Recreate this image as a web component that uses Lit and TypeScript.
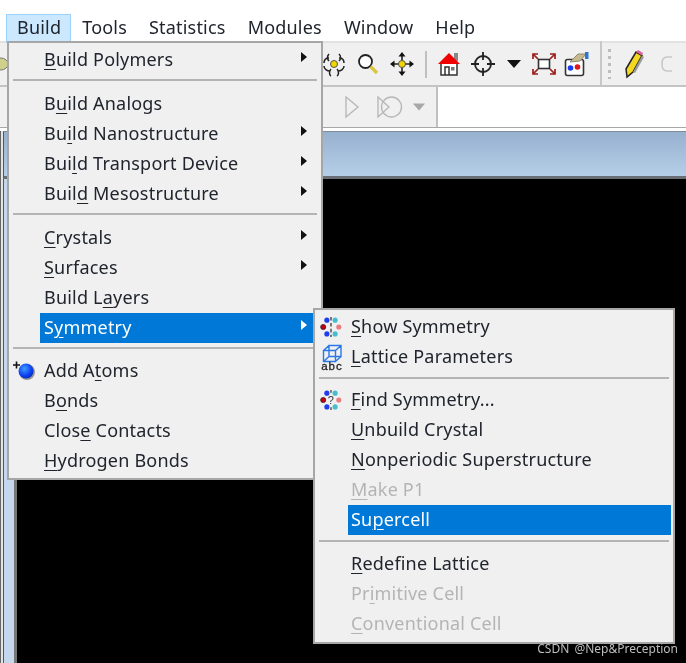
import { LitElement, html, css, svg } from 'lit';
import { customElement } from 'lit/decorators.js';

type Row = {
  text?: string; // label, the mnemonic letter goes between [ ]
  arrow?: boolean;
  on?: boolean;
  off?: boolean;
  icon?: unknown;
  sep?: boolean;
};

const dots = (middle: unknown) => html`<svg width="22" height="22" viewBox="0 0 24 24">
  <circle cx="7.5" cy="4.5" r="2.800" fill="#1f3df0"/><circle cx="16.5" cy="4.5" r="2.800" fill="#45bcd0"/>
  <circle cx="3.500" cy="12" r="2.800" fill="#c8000f" stroke="#222" stroke-width=".8"/><circle cx="20.500" cy="12" r="2.800" fill="#e87c80"/>
  <circle cx="7.5" cy="19.5" r="2.800" fill="#1f3df0"/><circle cx="16.5" cy="19.5" r="2.800" fill="#45bcd0"/>
  ${middle}
</svg>`;

const showIcon = dots(svg`<path d="M12 1v22" stroke="#333" stroke-width="1.4" stroke-dasharray="4 2.5" fill="none"/>`);
const findIcon = dots(svg`<path d="M12 1v3M12 20v3" stroke="#333" stroke-width="1.3"/><text x="12" y="16.500" font-size="12" text-anchor="middle" font-family="Liberation Sans, sans-serif" fill="#333">?</text>`);

const latticeIcon = html`<svg width="24" height="28" viewBox="0 0 24 28">
  <g fill="none" stroke="#2a78e8" stroke-width="1.4">
    <path d="M3.500 7.500h12v11h-12zM9 2.500h12v11H9zM3.500 7.500L9 2.500M15.500 7.500L21 2.500M15.500 18.500L21 13.500M3.500 18.500L9 13.500"/>
  </g>
  <text x="12" y="27" font-size="11.500" text-anchor="middle" letter-spacing="1" font-family="Liberation Sans, sans-serif" stroke="#222" stroke-width=".3" fill="#222">abc</text>
</svg>`;

const atomIcon = html`<svg width="28" height="24" viewBox="0 0 28 24">
  <path d="M1 6h7M4.500 2.500v7" stroke="#111" stroke-width="1.600"/>
  <circle cx="15" cy="13" r="8" fill="#555" opacity=".6"/>
  <defs><radialGradient id="ball" cx=".4" cy=".35" r=".7"><stop offset="0" stop-color="#3f9bff"/><stop offset=".7" stop-color="#0a3cf0"/><stop offset="1" stop-color="#0a2ab0"/></radialGradient></defs>
  <circle cx="14" cy="12" r="7.500" fill="url(#ball)"/>
</svg>`;

const buildMenu: Row[] = [
  { text: '[B]uild Polymers', arrow: true },
  { sep: true },
  { text: 'B[u]ild Analogs' },
  { text: 'Bu[i]ld Nanostructure', arrow: true },
  { text: 'Bui[l]d Transport Device', arrow: true },
  { text: 'Buil[d] Mesostructure', arrow: true },
  { sep: true },
  { text: '[C]rystals', arrow: true },
  { text: '[S]urfaces', arrow: true },
  { text: 'Build L[a]yers' },
  { text: 'S[y]mmetry', arrow: true, on: true },
  { sep: true },
  { text: 'Add A[t]oms', icon: atomIcon },
  { text: 'B[o]nds' },
  { text: 'Clos[e] Contacts' },
  { text: '[H]ydrogen Bonds' },
];

const symmetryMenu: Row[] = [
  { text: '[S]how Symmetry', icon: showIcon },
  { text: '[L]attice Parameters', icon: latticeIcon },
  { sep: true },
  { text: '[F]ind Symmetry...', icon: findIcon },
  { text: '[U]nbuild Crystal' },
  { text: '[N]onperiodic Superstructure' },
  { text: '[M]ake P1', off: true },
  { text: 'Su[p]ercell', on: true },
  { sep: true },
  { text: '[R]edefine Lattice' },
  { text: 'Pr[i]mitive Cell', off: true },
  { text: '[C]onventional Cell', off: true },
];

function label(text: string) {
  const m = text.match(/^(.*)\[(.)\](.*)$/);
  if (!m) return text;
  return html`${m[1]}<u>${m[2]}</u>${m[3]}`;
}

@customElement('app-root')
export class AppRoot extends LitElement {
  static styles = css`
    :host {
      display: block;
      position: relative;
      width: 686px;
      height: 663px;
      overflow: hidden;
      background: #fff;
      font-family: 'Noto Sans', sans-serif;
      font-size: 18px;
      letter-spacing: 0.2px;
      color: #20242c;
    }
    .page {
      height: 100%;
      filter: blur(0.35px);
    }
    .menubar {
      display: flex;
      height: 41px;
      padding: 14px 0 0 6px;
      box-sizing: border-box;
      background: #fff;
    }
    .top {
      height: 27px;
      line-height: 24px;
      padding: 0 10px;
      border: 1px solid transparent;
    }
    .top.open {
      background: #cce8ff;
      border: 1px solid #99d1ff;
      padding: 0 9px 0 10px;
    }
    .toolbar {
      display: flex;
      align-items: center;
      height: 42px;
      background: #f0f0f0;
      border-top: 2px solid #e2e2e2;
      border-bottom: 2px solid #c4c4c4;
      box-sizing: content-box;
    }
    .cell {
      display: flex;
      justify-content: center;
      align-items: center;
      flex: none;
    }
    .vsep {
      flex: none;
      width: 2px;
      height: 27px;
      margin: 0 5px 0 6px;
      background: #c0c0c0;
    }
    .grip {
      flex: none;
      width: 3px;
      height: 30px;
      margin-left: 6px;
      background: repeating-linear-gradient(#bdbdbd 0 3px, transparent 3px 7px);
    }
    .end {
      align-self: stretch;
      flex: none;
      width: 2px;
      margin: -2px 0 0 6px;
      background: #c8c8c8;
    }
    .row2 {
      display: flex;
      height: 40px;
      background: #fff;
      border-bottom: 1px solid #a8a8a8;
    }
    .row2-tools {
      display: flex;
      align-items: center;
      width: 436px;
      flex: none;
      background: #f0f0f0;
      border-right: 2px solid #c0c0c0;
    }
    .frame {
      display: flex;
      flex-direction: column;
      height: 533px;
      margin-top: 3px;
      padding-left: 2px;
      border-left: 1px solid #666;
      background: #e4e4e4;
    }
    .titlebar {
      height: 44px;
      border-left: 1px solid #555;
      background: linear-gradient(#96b0cf, #b6cfe8);
      border-top: 1px solid #7f8c99;
      border-bottom: 3px solid #6a6f76;
    }
    .body {
      flex: 1;
      border-left: 1px solid #555;
      background: #000;
      display: flex;
    }
    .body-edge {
      flex: none;
      width: 10px;
      background: #c4d7ec;
      border-right: 3px solid #777;
    }
    .menu {
      position: absolute;
      box-sizing: border-box;
      background: #f0f0f0;
      border: 2px solid #a6a6a6;
      padding-top: 2px;
    }
    .menu.build {
      left: 7px;
      top: 41px;
      width: 316px;
      height: 439px;
    }
    .menu.sym {
      left: 313px;
      top: 308px;
      width: 362px;
      height: 336px;
    }
    .item {
      display: flex;
      align-items: center;
      position: relative;
      height: 30px;
      line-height: 28px;
      margin: 0 2px 0 31px;
      padding-left: 4px;
      white-space: nowrap;
    }
    .item .text {
      margin-bottom: 2px;
    }
    .sym .item {
      margin-left: 33px;
      padding-left: 3px;
    }
    .item u {
      text-underline-offset: 3px;
      text-decoration-thickness: 1px;
    }
    .item.on {
      background: #0078d7;
      color: #fff;
    }
    .item.off {
      color: #b4b4b4;
    }
    .arrow {
      margin-left: auto;
      margin-right: 12px;
      margin-top: -7px;
      width: 0;
      height: 0;
      border-left: 6px solid #111;
      border-top: 5.5px solid transparent;
      border-bottom: 5.5px solid transparent;
    }
    .item.on .arrow {
      border-left-color: #fff;
    }
    .icon {
      position: absolute;
      top: 50%;
      transform: translateY(-50%);
      display: flex;
      left: -28px;
    }
    .sep {
      height: 2px;
      margin: 4px 4px 8px 4px;
      background: #b4b4b4;
    }
    .sep + .item.shift {
      margin-top: -1px;
    }
    .sym .sep {
      margin: 5px 4px 6px;
    }
    .sym .item.on + .sep {
      margin-bottom: 7px;
    }
    .watermark {
      position: absolute;
      right: 8px;
      bottom: 6px;
      font-size: 12px;
      line-height: 16px;
      letter-spacing: 0;
      word-spacing: 2px;
      color: #bdbdbd;
    }
  `;

  renderMenu(cls: string, rows: Row[]) {
    return html`<div class="menu ${cls}">
      ${rows.map((r) =>
        r.sep
          ? html`<div class="sep"></div>`
          : html`<div class="item ${r.on ? 'on' : ''} ${r.off ? 'off' : ''} ${r.icon === atomIcon ? 'shift' : ''}">
              ${r.icon ? html`<span class="icon">${r.icon}</span>` : ''}
              <span class="text">${label(r.text!)}</span>
              ${r.arrow ? html`<span class="arrow"></span>` : ''}
            </div>`
      )}
    </div>`;
  }

  render() {
    return html`
      <div class="page">
      <div class="menubar">
        ${['Build', 'Tools', 'Statistics', 'Modules', 'Window', 'Help'].map(
          (t, i) => html`<div class="top ${i === 0 ? 'open' : ''}">${t}</div>`
        )}
      </div>

      <div class="toolbar">
        <div class="cell" style="width:317px;justify-content:flex-start">
          <svg width="8" height="20" viewBox="0 0 8 20"><ellipse cx="1" cy="10" rx="7" ry="6" fill="#cfd08a" stroke="#777"/></svg>
        </div>
        <div class="cell" style="width:34px">
          <svg width="26" height="26" viewBox="0 0 26 26">
            <g fill="none" stroke="#222" stroke-width="1.500">
              <path d="M3 12c0-3 2-5 5-5M23 12c0-3-2-5-5-5M8 3c-2 2-2 5 0 7M18 3c2 2 2 5 0 7M3 15c0 3 3 5 6 5M23 15c0 3-3 5-6 5M10 25c-2-1-2-5 0-7M16 25c2-1 2-5 0-7"/>
            </g>
            <circle cx="13" cy="13" r="3.500" fill="#f2d400" stroke="#555"/>
          </svg>
        </div>
        <div class="cell" style="width:34px">
          <svg width="24" height="24" viewBox="0 0 24 24">
            <circle cx="9.500" cy="9.500" r="6.500" fill="#fff" stroke="#222" stroke-width="1.800"/>
            <path d="M14.500 14.500L21 21" stroke="#d8c640" stroke-width="3.400"/>
          </svg>
        </div>
        <div class="cell" style="width:34px">
          <svg width="26" height="26" viewBox="0 0 26 26">
            <path d="M13 3v20M3 13h20" stroke="#222" stroke-width="1.600"/>
            <path d="M13 1l3.500 4.500h-7zM13 25l3.500-4.500h-7zM1 13l4.500-3.500v7zM25 13l-4.500-3.500v7z" fill="#111"/>
            <circle cx="13" cy="13" r="3.500" fill="#f2d400" stroke="#555"/>
          </svg>
        </div>
        <div class="vsep"></div>
        <div class="cell" style="width:34px">
          <svg width="24" height="26" viewBox="0 0 24 26">
            <path d="M17 2h4v8h-4z" fill="#888"/>
            <path d="M4 12v12h16V12" fill="#fff" stroke="#333" stroke-width="1.500"/>
            <path d="M1 13L12 2l11 11z" fill="#f00000"/>
            <path d="M8 24v-8h4v8" fill="none" stroke="#333" stroke-width="1.500"/>
            <rect x="14" y="16" width="3.500" height="3.500" fill="#777"/>
          </svg>
        </div>
        <div class="cell" style="width:34px">
          <svg width="26" height="26" viewBox="0 0 26 26" fill="none" stroke="#222" stroke-width="1.800">
            <circle cx="13" cy="13" r="8"/>
            <path d="M13 1v8M13 17v8M1 13h8M17 13h8"/>
          </svg>
        </div>
        <div class="cell" style="width:28px">
          <svg width="16" height="10" viewBox="0 0 16 10"><path d="M1 1h14L8 9z" fill="#111"/></svg>
        </div>
        <div class="cell" style="width:32px">
          <svg width="24" height="24" viewBox="0 0 24 24" fill="none">
            <rect x="6.500" y="7.500" width="11" height="9" fill="#fff" stroke="#333" stroke-width="1.600"/>
            <path d="M1 7V2h5M18 2h5v5M23 17v5h-5M6 22H1v-5M2 3l4 4M22 3l-4 4M22 21l-4-4M2 21l4-4" stroke="#9a1c1c" stroke-width="1.700"/>
          </svg>
        </div>
        <div class="cell" style="width:34px">
          <svg width="26" height="26" viewBox="0 0 26 26">
            <rect x="1.500" y="8.500" width="18" height="16" rx="2" fill="#fff" stroke="#333" stroke-width="1.600"/>
            <path d="M6 11l8-8h8l-6 7z" fill="#c8b890" stroke="#8b8b70"/>
            <rect x="21" y="1" width="3.500" height="7" fill="#2a78d0"/>
            <circle cx="6.500" cy="17" r="2.800" fill="#1a3cf0"/>
            <circle cx="13.500" cy="16" r="2.800" fill="#e01818"/>
          </svg>
        </div>
        <div class="end"></div>
        <div class="grip"></div>
        <div class="cell" style="width:45px">
          <svg width="22" height="30" viewBox="0 0 22 30">
            <path d="M4 28l-1-8L13 3l6 3.500L10 23z" fill="#f2d820" stroke="#222" stroke-width="1.500"/>
            <path d="M13 3l6 3.500 1-2.500-5-3z" fill="#e060a0"/>
            <path d="M10 23l9-16.500 2 1.500-9 16z" fill="#999"/>
          </svg>
        </div>
        <div class="cell" style="width:22px">
          <svg width="14" height="20" viewBox="0 0 14 20"><path d="M12 3H7Q2 3 2 10t5 7h5" fill="none" stroke="#c8c8c8" stroke-width="1.600"/></svg>
        </div>
      </div>

      <div class="row2">
        <div class="row2-tools">
          <div class="cell" style="width:336px"></div>
          <div class="cell" style="width:32px">
            <svg width="16" height="24" viewBox="0 0 16 24"><path d="M2 2l12 10L2 22z" fill="none" stroke="#b8b8b8" stroke-width="1.400"/></svg>
          </div>
          <div class="cell" style="width:44px">
            <svg width="26" height="24" viewBox="0 0 26 24" fill="none" stroke="#b8b8b8" stroke-width="1.400">
              <circle cx="14.500" cy="12" r="10"/>
              <path d="M1 2l11 10L1 22z"/>
            </svg>
          </div>
          <div class="cell" style="width:14px">
            <svg width="16" height="10" viewBox="0 0 16 10"><path d="M1 1h14L8 9z" fill="#a8a8a8"/></svg>
          </div>
        </div>
      </div>

      <div class="frame">
        <div class="titlebar"></div>
        <div class="body"><div class="body-edge"></div></div>
      </div>

      ${this.renderMenu('build', buildMenu)}
      ${this.renderMenu('sym', symmetryMenu)}
      <div class="watermark">CSDN @Nep&amp;Preception</div>
      </div>
    `;
  }
}
